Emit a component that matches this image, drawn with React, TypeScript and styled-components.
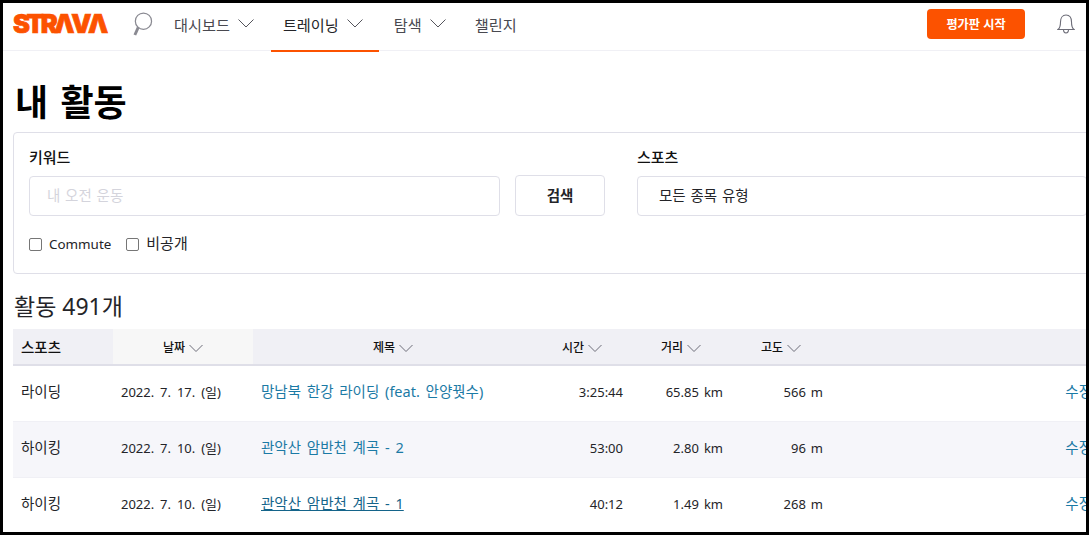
import * as React from 'react';
import styled, { createGlobalStyle } from 'styled-components';

const colors = {
  brand: '#fc5200',
  text: '#242428',
  nav: '#494950',
  link: '#1b7aa5',
  line: '#dfdfe8',
  stripe: '#f6f6fa',
  head: '#f0f0f5',
};

const GlobalStyle = createGlobalStyle`
  html, body {
    margin: 0;
    padding: 0;
    background: #000;
  }
  body {
    font-family: "Noto Sans", "Noto Sans CJK KR", sans-serif;
    color: ${colors.text};
  }
`;

const Frame = styled.div`
  width: 1083px;
  height: 529px;
  margin: 3px 3px 3px 3px;
  background: white;
  overflow: hidden;
`;

const Nav = styled.nav`
  display: flex;
  align-items: stretch;
  height: 48px;
  width: 1083px;
  padding-left: 10px;
  box-sizing: border-box;
  border-bottom: 1px solid #f0f0f5;
`;

const Logo = styled.a`
  width: 95px;
  margin: 0 24px 5px 0;
  align-self: center;
  font-family: "Inter", sans-serif;
  font-weight: 900;
  font-size: 25.5px;
  line-height: 28px;
  letter-spacing: -3.4px;
  color: ${colors.brand};
  -webkit-text-stroke: 0.7px ${colors.brand};
  white-space: nowrap;
`;

const SearchIcon = styled.svg`
  width: 21px;
  height: 25px;
  align-self: center;
  margin: 0 9px 5px 0;
  color: #8a8a92;
`;

const NavItem = styled.a<{ $active?: boolean }>`
  display: flex;
  align-items: center;
  gap: 8px;
  padding: 0 16px 6px 12px;
  margin-right: ${({ $active }) => ($active ? '3px' : '1px')};
  height: 49px;
  box-sizing: border-box;
  font-size: 15.2px;
  color: ${({ $active }) => ($active ? colors.text : colors.nav)};
  border-bottom: 2px solid ${({ $active }) => ($active ? colors.brand : 'transparent')};
`;

const NavChevron = styled.svg`
  width: 16px;
  height: 9px;
  color: #55555c;
`;

const NavRight = styled.div`
  margin-left: auto;
  display: flex;
  align-items: center;
  gap: 32px;
  padding: 0 11px 5px 0;
`;

const StartButton = styled.button`
  width: 98px;
  height: 30px;
  border: 0;
  border-radius: 4px;
  background: ${colors.brand};
  color: white;
  font-family: inherit;
  font-size: 12.2px;
  font-weight: 700;
  padding: 0;
`;

const BellIcon = styled.svg`
  width: 18px;
  height: 21px;
  color: #6d6d78;
`;

const Main = styled.main`
  padding: 0 0 0 10px;
  width: 1100px;
  box-sizing: border-box;
`;

const Title = styled.h1`
  margin: 30px 0 7px 2px;
  font-size: 36px;
  line-height: 44px;
  font-weight: 700;
  word-spacing: 3px;
  color: #000;
`;

const SearchCard = styled.section`
  box-sizing: border-box;
  height: 142px;
  padding: 15px;
  border: 1px solid ${colors.line};
  border-radius: 4px;
`;

const FieldGrid = styled.div`
  display: grid;
  grid-template-columns: 471px 90px 1fr;
  column-gap: 15px;
`;

const Field = styled.div`
  display: flex;
  flex-direction: column;
  gap: 9px;
`;

const SportField = styled(Field)`
  margin-left: 17px;
`;

const FieldLabel = styled.label`
  font-size: 15px;
  line-height: 19px;
  font-weight: 500;
  color: #111;
`;

const TextBox = styled.div<{ $muted?: boolean; $inset: number }>`
  box-sizing: border-box;
  height: 40px;
  padding: 0 17px 3px ${({ $inset }) => $inset}px;
  display: flex;
  align-items: center;
  border: 1px solid ${colors.line};
  border-radius: 4px;
  font-size: 14.5px;
  word-spacing: 1px;
  color: ${({ $muted }) => ($muted ? '#d4d4dc' : colors.text)};
`;

const SearchButton = styled.button`
  box-sizing: border-box;
  height: 41px;
  margin-top: 27px;
  background: white;
  border: 1px solid ${colors.line};
  border-radius: 4px;
  font-family: inherit;
  font-size: 14.5px;
  font-weight: 700;
  color: ${colors.text};
  padding: 0 0 2px;
`;

const CheckRow = styled.div`
  display: flex;
  align-items: center;
  gap: 15px;
  margin-top: 18px;
`;

const CheckLabel = styled.label`
  display: flex;
  align-items: center;
  gap: 7px;
  font-size: 13.4px;
  line-height: 20px;
  color: ${colors.text};
`;

const KoreanLabel = styled.span`
  font-size: 15px;
  margin-top: -2px;
`;

const CheckBox = styled.input`
  appearance: none;
  box-sizing: border-box;
  width: 13px;
  height: 13px;
  margin: 0;
  background: white;
  border: 1px solid #767676;
  border-radius: 2px;
`;

const SubTitle = styled.h2`
  margin: 16px 0 7px 1px;
  font-size: 23px;
  line-height: 32px;
  font-weight: 400;
  color: ${colors.text};
`;

const Table = styled.table`
  width: 1087px;
  table-layout: fixed;
  border-collapse: collapse;
`;

const HeadCell = styled.th<{ $w?: number; $left?: boolean; $light?: boolean }>`
  width: ${({ $w }) => ($w ? `${$w}px` : 'auto')};
  height: 36px;
  padding: 0 8px;
  box-sizing: border-box;
  background: ${({ $light }) => ($light ? '#f7f7f7' : colors.head)};
  border-bottom: 2px solid ${colors.line};
  font-size: ${({ $left }) => ($left ? '14.5px' : '12px')};
  font-weight: 500;
  color: #111;
  text-align: ${({ $left }) => ($left ? 'left' : 'center')};
  white-space: nowrap;
`;

const SortChevron = styled.svg`
  width: 14px;
  height: 8px;
  margin-left: 4px;
  color: #6d6d78;
`;

const Row = styled.tr<{ $stripe?: boolean }>`
  height: 56px;
  background: ${({ $stripe }) => ($stripe ? colors.stripe : 'white')};
  border-bottom: 1px solid #f0f0f5;
`;

const Cell = styled.td<{ $right?: boolean; $korean?: boolean }>`
  padding: 0 8px ${({ $korean }) => ($korean ? '5px' : '3px')};
  font-size: ${({ $korean }) => ($korean ? '14.5px' : '13px')};
  word-spacing: ${({ $korean }) => ($korean ? '2px' : '2.5px')};
  color: ${colors.text};
  text-align: ${({ $right }) => ($right ? 'right' : 'left')};
  white-space: nowrap;
`;

const Unit = styled.span`
  margin-left: 5px;
`;

const ActivityLink = styled.a<{ $hover?: boolean }>`
  color: ${({ $hover }) => ($hover ? '#14648a' : colors.link)};
  text-decoration: ${({ $hover }) => ($hover ? 'underline' : 'none')};
`;

const EditLink = styled.a`
  color: ${colors.link};
`;

const Chevron = () => (
  <NavChevron viewBox="0 0 16 9" fill="none" stroke="currentColor" strokeWidth="1">
    <path d="M0.5 0.5 L8 8 L15.5 0.5" />
  </NavChevron>
);

const HeadLabel = ({ children }: { children: React.ReactNode }) => (
  <>
    {children}
    <SortChevron viewBox="0 0 14 8" fill="none" stroke="currentColor" strokeWidth="1">
      <path d="M0.5 1 L7 7.5 L13.5 1" />
    </SortChevron>
  </>
);

const activities = [
  { sport: '라이딩', date: '2022. 7. 17. (일)', title: '망남북 한강 라이딩 (feat. 안양꿧수)', time: '3:25:44', km: '65.85', m: '566' },
  { sport: '하이킹', date: '2022. 7. 10. (일)', title: '관악산 암반천 계곡 - 2', time: '53:00', km: '2.80', m: '96' },
  { sport: '하이킹', date: '2022. 7. 10. (일)', title: '관악산 암반천 계곡 - 1', time: '40:12', km: '1.49', m: '268' },
];

export default function App() {
  return (
    <Frame>
      <GlobalStyle />
      <Nav>
        <Logo>STRΛVΛ</Logo>
        <SearchIcon viewBox="0 0 22 26" fill="none" stroke="currentColor">
          <circle cx="12" cy="9.5" r="8.5" strokeWidth="1.3" />
          <path d="M6.5 16 L3 24" strokeWidth="3" />
        </SearchIcon>
        <NavItem>대시보드<Chevron /></NavItem>
        <NavItem $active>트레이닝<Chevron /></NavItem>
        <NavItem>탐색<Chevron /></NavItem>
        <NavItem>챌린지</NavItem>
        <NavRight>
          <StartButton>평가판 시작</StartButton>
          <BellIcon viewBox="0 0 18 21" fill="none" stroke="currentColor" strokeWidth="1.1">
            <path d="M1 15.5 C3 14 3.5 12 3.5 8 C3.5 4 5.5 1 9 1 C12.5 1 14.5 4 14.5 8 C14.5 12 15 14 17 15.5 Z" />
            <path d="M6.5 15.5 C6.5 20 11.5 20 11.5 15.5" />
          </BellIcon>
        </NavRight>
      </Nav>
      <Main>
        <Title>내 활동</Title>
        <SearchCard>
          <FieldGrid>
            <Field>
              <FieldLabel>키워드</FieldLabel>
              <TextBox $muted $inset={17}>내 오전 운동</TextBox>
            </Field>
            <SearchButton>검색</SearchButton>
            <SportField>
              <FieldLabel>스포츠</FieldLabel>
              <TextBox $inset={21}>모든 종목 유형</TextBox>
            </SportField>
          </FieldGrid>
          <CheckRow>
            <CheckLabel><CheckBox type="checkbox" />Commute</CheckLabel>
            <CheckLabel><CheckBox type="checkbox" /><KoreanLabel>비공개</KoreanLabel></CheckLabel>
          </CheckRow>
        </SearchCard>
        <SubTitle>활동 491개</SubTitle>
        <Table>
          <thead>
            <tr>
              <HeadCell $w={100} $left>스포츠</HeadCell>
              <HeadCell $w={140} $light><HeadLabel>날짜</HeadLabel></HeadCell>
              <HeadCell $w={280}><HeadLabel>제목</HeadLabel></HeadCell>
              <HeadCell $w={98}><HeadLabel>시간</HeadLabel></HeadCell>
              <HeadCell $w={100}><HeadLabel>거리</HeadLabel></HeadCell>
              <HeadCell $w={100}><HeadLabel>고도</HeadLabel></HeadCell>
              <HeadCell />
            </tr>
          </thead>
          <tbody>
            {activities.map((a, i) => (
              <Row key={a.title} $stripe={i === 1}>
                <Cell $korean>{a.sport}</Cell>
                <Cell>{a.date}</Cell>
                <Cell $korean><ActivityLink $hover={i === 2}>{a.title}</ActivityLink></Cell>
                <Cell $right>{a.time}</Cell>
                <Cell $right>{a.km}<Unit>km</Unit></Cell>
                <Cell $right>{a.m}<Unit>m</Unit></Cell>
                <Cell $right $korean><EditLink>수정</EditLink></Cell>
              </Row>
            ))}
          </tbody>
        </Table>
      </Main>
    </Frame>
  );
}
